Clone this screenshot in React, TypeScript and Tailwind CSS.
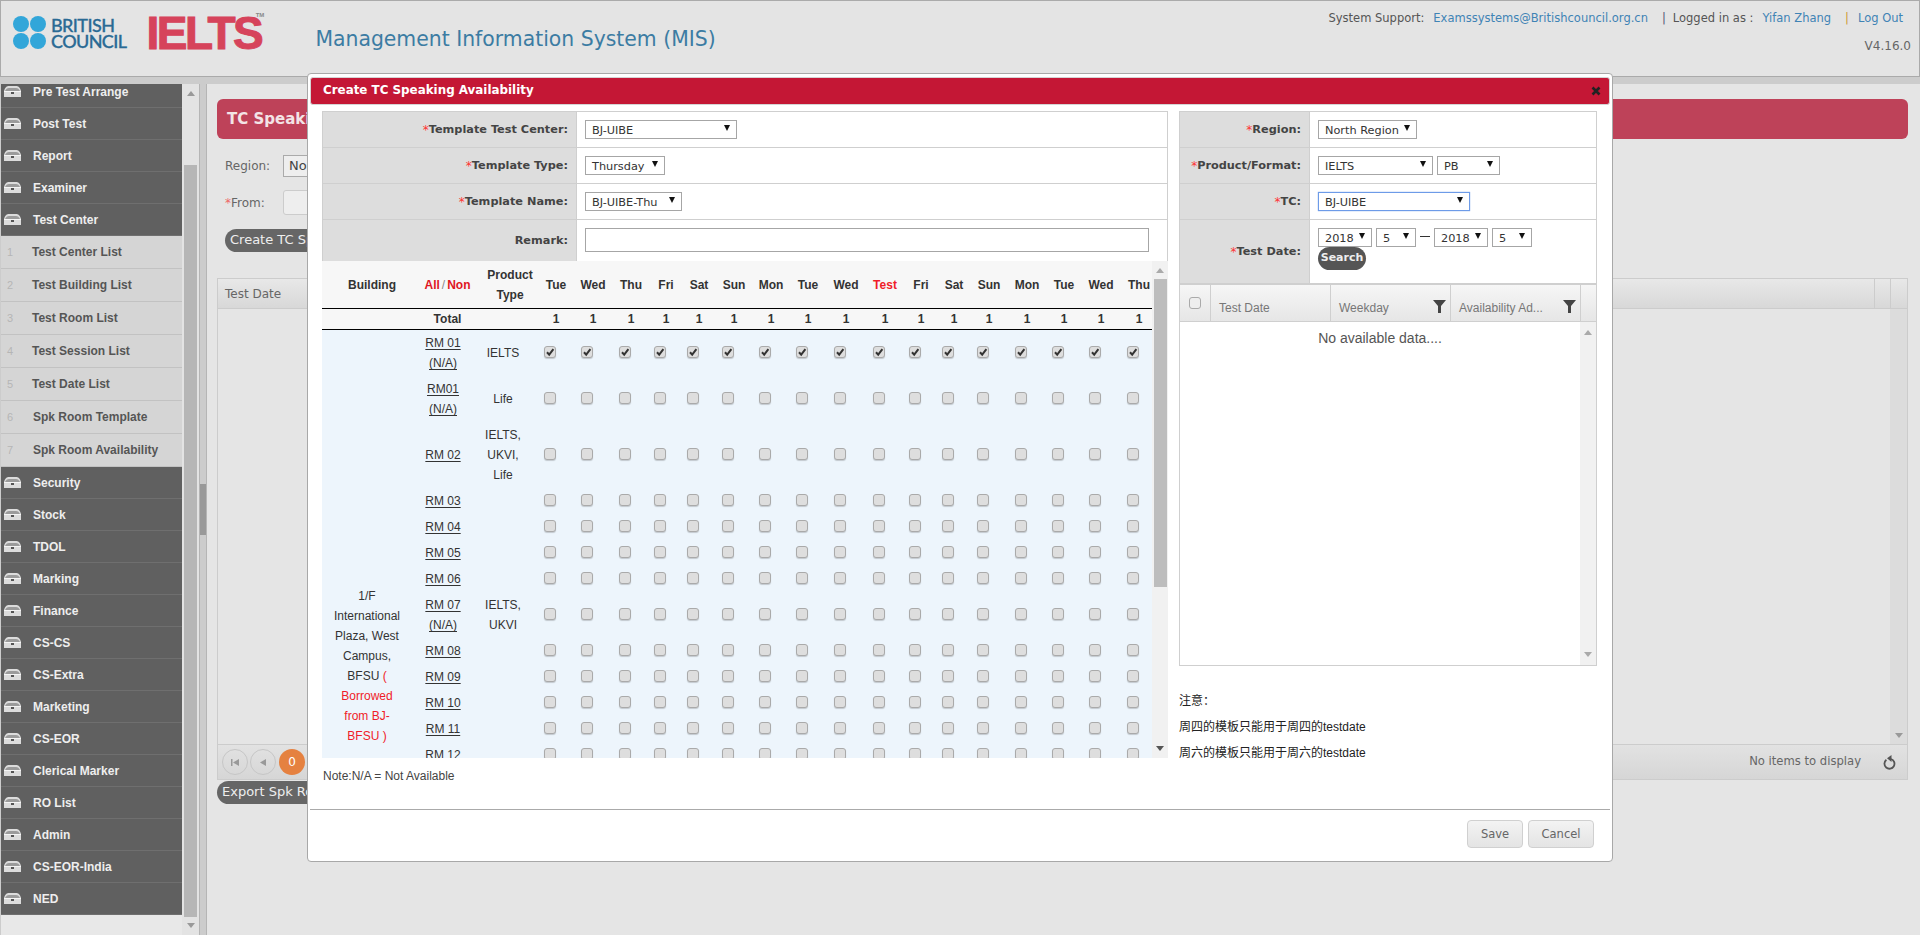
import React from 'react';

const DJ = "font-['DejaVu_Sans',sans-serif]";
const AR = "font-['Liberation_Sans',Arial,sans-serif]";

function Arrow({ cls = '' }: { cls?: string }) {
  return (
    <svg width="6" height="7" viewBox="0 0 6 7" className={cls}>
      <polygon points="0,0 6,0 3,6" fill="#111" />
    </svg>
  );
}

function Select({ text, w, focus }: { text: string; w: string; focus?: boolean }) {
  return (
    <div
      className={`${w} h-[19px] shrink-0 flex items-center justify-between bg-white pl-[6px] pr-[6px] text-[11.3px] leading-[19px] text-[#333] border ${
        focus ? 'border-[#6d9be8] shadow-[0_0_1px_#6d9be8]' : 'border-[#a6a6a6]'
      }`}
    >
      <span className="whitespace-nowrap mt-[1px]">{text}</span>
      <Arrow cls="-mt-[3px]" />
    </div>
  );
}

function FormRow({ label, req, h, children, labelW, last }: { label: string; req?: boolean; h: string; children: React.ReactNode; labelW: string; last?: boolean }) {
  return (
    <div className={`flex ${h} ${last ? '' : 'border-b border-[#cfcfcf]'}`}>
      <div className={`${labelW} shrink-0 bg-[#dddddd] border-r border-[#cfcfcf] flex items-center justify-end pr-[8px] pt-[2px] text-[11.3px] font-bold text-[#444] whitespace-nowrap`}>
        {req && <span className="text-[#f33] font-normal text-[12px] -mt-[2px]">*</span>}
        {label}
      </div>
      <div className="flex-1 pl-[8px] pt-[8px]">{children}</div>
    </div>
  );
}

function Check({ on }: { on?: boolean }) {
  return (
    <span className="inline-block align-middle w-[12px] h-[12px] mr-[12px] -mt-[4px] rounded-[3px] bg-[#dedede] border border-[#aaaaaa] shadow-[0_1px_1px_rgba(0,0,0,0.18)] relative">
      {on && (
        <svg viewBox="0 0 12 12" className="absolute -left-[1px] -top-[1px] w-[12px] h-[12px]">
          <path d="M3 6.2 L5.2 8.6 L9.4 3.2" fill="none" stroke="#333" strokeWidth="2" />
        </svg>
      )}
    </span>
  );
}

function Tray() {
  return (
    <svg width="19" height="13" viewBox="0 0 19 13" className="shrink-0">
      <path d="M1 6 C2 2 4 1 6 1 H13 C15 1 17 2 18 6 V12 H1 Z" fill="#dcdcdc" />
      <path d="M2 6 C3 4 4 3 6 3 H13 C15 3 16 4 17 6 Z" fill="#9b9b9b" />
      <rect x="1" y="6" width="17" height="1" fill="#f5f5f5" />
      <rect x="8" y="7" width="3" height="2" fill="#555" />
    </svg>
  );
}

const TopMenu = ['Pre Test Arrange', 'Post Test', 'Report', 'Examiner', 'Test Center'];
const SubMenu = ['Test Center List', 'Test Building List', 'Test Room List', 'Test Session List', 'Test Date List', 'Spk Room Template', 'Spk Room Availability'];
const BottomMenu = ['Security', 'Stock', 'TDOL', 'Marking', 'Finance', 'CS-CS', 'CS-Extra', 'Marketing', 'CS-EOR', 'Clerical Marker', 'RO List', 'Admin', 'CS-EOR-India', 'NED'];

function MenuRow({ t }: { t: string }) {
  return (
    <div className="h-[32px] flex items-center bg-[#606060] border-b border-[#6f6f6f] pl-[2px]">
      <Tray />
      <span className="ml-[11px] text-[12px] font-bold text-[#eeeeee]">{t}</span>
    </div>
  );
}

function TriUp({ c = '#999' }: { c?: string }) {
  return (
    <svg width="8" height="5" viewBox="0 0 8 5">
      <polygon points="0,5 8,5 4,0" fill={c} />
    </svg>
  );
}
function TriDown({ c = '#999' }: { c?: string }) {
  return (
    <svg width="8" height="5" viewBox="0 0 8 5">
      <polygon points="0,0 8,0 4,5" fill={c} />
    </svg>
  );
}

function Sidebar() {
  return (
    <div className="w-[198px] ml-[1px] shrink-0 flex bg-[#e8e8e8] h-full">
      <div className={`w-[181px] h-full overflow-hidden ${AR}`}>
        <div className="-mt-[8px]">
          {TopMenu.map((t) => <MenuRow key={t} t={t} />)}
          {SubMenu.map((t, i) => (
            <div key={t} className="h-[33px] flex items-center bg-[#d5d5d5] border-b border-[#c2c2c2] text-[12px] font-bold text-[#555555]">
              <span className="w-[31px] pl-[6px] text-[11px] font-normal text-[#b5b5b5]">{i + 1}</span>
              <span className={i > 4 ? 'ml-[1px] font-bold' : 'font-bold'}>{t}</span>
            </div>
          ))}
          {BottomMenu.map((t) => <MenuRow key={t} t={t} />)}
        </div>
      </div>
      <div className="w-[17px] h-full flex flex-col items-center bg-[#e3e3e3] pt-[7px]">
        <TriUp />
        <div className="w-[13px] h-[752px] mt-[69px] bg-[#b6b6b6]" />
        <div className="mt-[6px]"><TriDown /></div>
      </div>
    </div>
  );
}

function Splitter() {
  return (
    <div className="w-[8px] shrink-0 h-full flex flex-col border-x border-[#b5b5b5] bg-[#cccccc] pt-[400px]">
      <div className="h-[51px] bg-[#999999]" />
    </div>
  );
}

function Funnel() {
  return (
    <svg width="13" height="13" viewBox="0 0 13 13">
      <polygon points="0,0 13,0 8,6 8,13 5,13 5,6" fill="#444" />
    </svg>
  );
}

function Main() {
  return (
    <div className={`flex-1 h-full bg-[#e5e5e5] pl-[10px] pr-[12px] pt-[15px] ${DJ} text-[#555]`}>
      <div className="h-[40px] bg-[#be4259] rounded-[6px] flex items-center pl-[10px] text-[15px] font-bold text-[#f3e4e6]">TC Speaking Availability</div>
      <div className="flex items-center h-[22px] mt-[16px] pl-[8px] text-[12px] text-[#666]">
        <span className="w-[58px]">Region:</span>
        <div className="w-[100px] h-[22px] border border-[#aaa] bg-[#eee] pl-[5px] leading-[20px] text-[13px] text-[#444]">North Region</div>
      </div>
      <div className="flex items-center h-[25px] mt-[13px] pl-[8px] text-[12px] text-[#666]">
        <span className="w-[58px]"><span className="text-[#e66]">*</span>From:</span>
        <div className="w-[100px] h-[25px] border border-[#ccc] rounded-[3px] bg-[#eee]" />
      </div>
      <div className="mt-[14px] ml-[8px] w-fit h-[23px] rounded-full bg-[#666] px-[5px] leading-[21px] text-[13px] text-[#eee]">Create TC Speaking Availability</div>
      <div className="mt-[26px] border border-[#ccc] h-[467px] flex flex-col">
        <div className="h-[30px] flex bg-gradient-to-b from-[#e8e8e8] to-[#d8d8d8] border-b border-[#ccc] items-center">
          <span className="pl-[7px] text-[12px] text-[#666]">Test Date</span>
          <div className="ml-auto h-full w-[16px] border-l border-[#ccc]" />
          <div className="h-full w-[17px] border-l border-[#ccc]" />
        </div>
        <div className="flex-1 flex justify-end">
          <div className="w-[17px] bg-[#dcdcdc] flex flex-col justify-end items-center pb-[6px]"><TriDown /></div>
        </div>
      </div>
      <div className="h-[35px] border border-t-0 border-[#ccc] bg-gradient-to-b from-[#e2e2e2] to-[#d6d6d6] flex items-center px-[4px] gap-[2px]">
        <div className="w-[26px] h-[26px] rounded-full border border-[#c6c6c6] flex items-center justify-center">
          <svg width="9" height="9" viewBox="0 0 9 9"><rect x="0" y="1" width="1.5" height="7" fill="#999" /><polygon points="8,1 8,8 2,4.5" fill="#999" /></svg>
        </div>
        <div className="w-[26px] h-[26px] rounded-full border border-[#c6c6c6] flex items-center justify-center">
          <svg width="7" height="9" viewBox="0 0 7 9"><polygon points="6,1 6,8 0,4.5" fill="#999" /></svg>
        </div>
        <div className="w-[26px] h-[26px] ml-[1px] rounded-full bg-[#e58140] flex items-center justify-center text-[12px] text-white">0</div>
        <span className="ml-auto mr-[20px] text-[11.6px] text-[#666]">No items to display</span>
        <svg width="14" height="16" viewBox="0 0 14 16" className="mr-[6px]">
          <path d="M3.4 5.8 A5 5 0 1 0 8 5" fill="none" stroke="#555" strokeWidth="1.8" />
          <polygon points="8.5,1 8.5,8 4,4.2" fill="#555" />
        </svg>
      </div>
      <div className="mt-[1px] w-fit h-[23px] rounded-full bg-[#666] px-[5px] leading-[21px] text-[13px] text-[#eee]">Export Spk Room Availability</div>
    </div>
  );
}

const heads = ['Tue', 'Wed', 'Thu', 'Fri', 'Sat', 'Sun', 'Mon', 'Tue', 'Wed', 'Test', 'Fri', 'Sat', 'Sun', 'Mon', 'Tue', 'Wed', 'Thu'];
const colW = ['w-[90px]', 'w-[71px]', 'w-[54px]', 'w-[38px]', 'w-[36px]', 'w-[40px]', 'w-[30px]', 'w-[36px]', 'w-[34px]', 'w-[40px]', 'w-[34px]', 'w-[42px]', 'w-[36px]', 'w-[36px]', 'w-[30px]', 'w-[40px]', 'w-[36px]', 'w-[38px]', 'w-[36px]', 'w-[40px]'];

type Room = { a: string; b?: string; p?: string[] };
const rooms: Room[] = [
  { a: 'RM 01', b: '(N/A)', p: ['IELTS'] },
  { a: 'RM01', b: '(N/A)', p: ['Life'] },
  { a: 'RM 02', p: ['IELTS,', 'UKVI,', 'Life'] },
  { a: 'RM 03' }, { a: 'RM 04' }, { a: 'RM 05' }, { a: 'RM 06' },
  { a: 'RM 07', b: '(N/A)', p: ['IELTS,', 'UKVI'] },
  { a: 'RM 08' }, { a: 'RM 09' }, { a: 'RM 10' }, { a: 'RM 11' }, { a: 'RM 12' },
  { a: 'RM 13' }, { a: 'RM 14' }, { a: 'RM 15' }, { a: 'RM 16' }, { a: 'RM 17' },
  { a: 'RM 18' }, { a: 'RM 19' }, { a: 'RM 20' }, { a: 'RM 21' },
];

function RoomTable() {
  return (
    <div className="w-[830px] h-[497px] overflow-hidden">
      <table className={`table-fixed w-[837px] border-separate border-spacing-0 text-[12px] leading-[20px] text-[#333] ${AR}`}>
        <colgroup>{colW.map((w, i) => <col key={i} className={w} />)}</colgroup>
        <thead className="bg-[#f7f7f7]">
          <tr>
            <th className="h-[48px] border-b border-black font-bold pl-[10px]">Building</th>
            <th className="border-b border-black font-bold text-[#e0161f]">All<span className="text-[#888] font-normal px-[2px]">/</span>Non</th>
            <th className="border-b border-black font-bold">Product<br />Type</th>
            {heads.map((h, i) => (
              <th key={i} className={`border-b border-black font-bold ${h === 'Test' ? 'text-[#f01c28]' : ''}`}>{h}</th>
            ))}
          </tr>
          <tr>
            <td className="h-[21px] border-b border-black" />
            <td className="border-b border-black text-center font-bold">Total</td>
            <td className="border-b border-black" />
            {heads.map((_, i) => <td key={i} className="border-b border-black text-center font-bold">1</td>)}
          </tr>
        </thead>
        <tbody className="bg-[#edf5fc]">
          {rooms.map((r, idx) => (
            <tr key={idx}>
              {idx === 0 && (
                <td rowSpan={rooms.length} className="text-center align-middle px-[8px]">
                  1/F International Plaza, West Campus, BFSU <span className="text-[#f01c28]">( Borrowed from BJ-BFSU )</span>
                </td>
              )}
              <td className="text-center py-[3px] pr-[9px] underline underline-offset-2">
                {r.a}
                {r.b && <><br />{r.b}</>}
              </td>
              <td className="text-center py-[3px] pr-[14px]">
                {r.p?.map((x, i) => <div key={i}>{x}</div>)}
              </td>
              {heads.map((_, i) => (
                <td key={i} className="text-center"><Check on={idx === 0} /></td>
              ))}
            </tr>
          ))}
        </tbody>
      </table>
    </div>
  );
}

function Modal() {
  return (
    <div className={`absolute left-[307px] top-[73px] w-[1306px] h-[789px] bg-white border border-[#a8a8a8] rounded-[4px] px-[2px] pt-[3px] flex flex-col ${DJ}`}>
      <div className="h-[28px] shrink-0 bg-[#c41735] border border-[#d4d4d4] rounded-[3px] flex items-center justify-between pl-[12px] pr-[8px]">
        <span className="text-[11.9px] font-bold text-white">Create TC Speaking Availability</span>
        <svg width="10" height="10" viewBox="0 0 10 10"><path d="M1.5 1.5 L8.5 8.5 M8.5 1.5 L1.5 8.5" stroke="#222" strokeWidth="2.6" /></svg>
      </div>
      <div className="flex h-[698px] shrink-0 mt-[6px] pl-[12px] gap-[11px]">
        <div className="w-[846px] shrink-0">
          <div className="border border-[#cfcfcf] border-b-0">
            <FormRow label="Template Test Center:" req h="h-[36px]" labelW="w-[254px]"><Select text="BJ-UIBE" w="w-[152px]" /></FormRow>
            <FormRow label="Template Type:" req h="h-[36px]" labelW="w-[254px]"><Select text="Thursday" w="w-[80px]" /></FormRow>
            <FormRow label="Template Name:" req h="h-[36px]" labelW="w-[254px]"><Select text="BJ-UIBE-Thu" w="w-[97px]" /></FormRow>
            <FormRow label="Remark:" h="h-[41px]" labelW="w-[254px]" last>
              <div className="w-[564px] h-[24px] border border-[#a6a6a6] bg-white" />
            </FormRow>
          </div>
          <div className="flex h-[497px]">
            <RoomTable />
            <div className="w-[16px] bg-[#f1f1f1] flex flex-col items-center pt-[7px]">
              <TriUp c="#aaa" />
              <div className="w-[13px] h-[308px] mt-[6px] bg-[#bdbdbd]" />
              <div className="mt-auto mb-[7px]"><TriDown c="#555" /></div>
            </div>
          </div>
          <div className={`pt-[10px] text-[12px] leading-[16px] text-[#444] pl-[1px] ${AR}`}>Note:N/A = Not Available</div>
        </div>
        <div className="w-[418px] shrink-0">
          <div className="border border-[#cfcfcf] border-b-0">
            <FormRow label="Region:" req h="h-[36px]" labelW="w-[130px]"><Select text="North Region" w="w-[99px]" /></FormRow>
            <FormRow label="Product/Format:" req h="h-[36px]" labelW="w-[130px]">
              <div className="flex gap-[4px]"><Select text="IELTS" w="w-[115px]" /><Select text="PB" w="w-[63px]" /></div>
            </FormRow>
            <FormRow label="TC:" req h="h-[36px]" labelW="w-[130px]"><Select text="BJ-UIBE" w="w-[152px]" focus /></FormRow>
            <FormRow label="Test Date:" req h="h-[64px]" labelW="w-[130px]">
              <div className="flex gap-[4px] items-center">
                <Select text="2018" w="w-[54px]" />
                <Select text="5" w="w-[40px]" />
                <div className="w-[10px] h-px bg-[#333] -mt-[3px]" />
                <Select text="2018" w="w-[54px]" />
                <Select text="5" w="w-[40px]" />
              </div>
              <div className="w-[48px] h-[23px] rounded-full bg-[#555] text-center text-[11px] font-bold leading-[21px] text-[#eee]">Search</div>
            </FormRow>
          </div>
          <div className={`border border-[#cfcfcf] h-[382px] flex flex-col ${AR}`}>
            <div className="h-[37px] flex shrink-0 bg-gradient-to-b from-[#f6f6f6] to-[#e6e6e6] border-b border-[#cfcfcf] text-[12px] text-[#777]">
              <div className="w-[31px] border-r border-[#cfcfcf] flex items-center justify-center">
                <span className="w-[12px] h-[12px] rounded-[3px] border border-[#aaa] bg-[#eee]" />
              </div>
              <div className="w-[120px] border-r border-[#cfcfcf] pl-[8px] pt-[13px] leading-[20px]">Test Date</div>
              <div className="w-[120px] border-r border-[#cfcfcf] pl-[8px] pt-[13px] leading-[20px] flex justify-between pr-[4px]">
                <span>Weekday</span><span className="pt-[2px]"><Funnel /></span>
              </div>
              <div className="w-[130px] border-r border-[#cfcfcf] pl-[8px] pt-[13px] leading-[20px] flex justify-between pr-[4px]">
                <span>Availability Ad...</span><span className="pt-[2px]"><Funnel /></span>
              </div>
            </div>
            <div className="flex-1 flex">
              <div className="flex-1 text-center text-[14px] text-[#555] pt-[7px] leading-[18px]">No available data....</div>
              <div className="w-[16px] bg-[#f1f1f1] flex flex-col items-center justify-between py-[8px]">
                <TriUp c="#aaa" /><TriDown c="#aaa" />
              </div>
            </div>
          </div>
          <div className={`mt-[22px] text-[12px] leading-[26px] text-[#222] font-['Liberation_Sans','Noto_Sans_CJK_SC',sans-serif]`}>
            <div>注意：</div>
            <div>周四的模板只能用于周四的testdate</div>
            <div>周六的模板只能用于周六的testdate</div>
          </div>
        </div>
      </div>
      <div className="border-t border-[#aaaaaa] flex justify-end gap-[5px] pt-[10px] pr-[16px]">
        <div className="w-[56px] h-[28px] rounded-[4px] border border-[#d0d0d0] bg-gradient-to-b from-[#f3f3f3] to-[#e4e4e4] text-center leading-[26px] text-[11.5px] text-[#666]">Save</div>
        <div className="w-[66px] h-[28px] rounded-[4px] border border-[#d0d0d0] bg-gradient-to-b from-[#f3f3f3] to-[#e4e4e4] text-center leading-[26px] text-[11.5px] text-[#666]">Cancel</div>
      </div>
    </div>
  );
}

function Header() {
  return (
    <div className={`h-[77px] shrink-0 bg-[#e4e4e4] border border-[#aaaaaa] flex ${DJ}`}>
      <div className="flex pl-[12px] pt-[15px] h-full">
        <div className="grid grid-cols-2 gap-[1px] w-[33px] h-[33px] shrink-0">
          <span className="rounded-full bg-[#32a6d9]" /><span className="rounded-full bg-[#32a6d9]" />
          <span className="rounded-full bg-[#32a6d9]" /><span className="rounded-full bg-[#32a6d9]" />
        </div>
        <div className="ml-[5px] -mt-[1px] text-[18px] leading-[16px] pt-[2px] font-['Lato',sans-serif] text-[#2a6a94] font-medium tracking-[-0.6px] [-webkit-text-stroke:0.3px_#2a6a94]">BRITISH<br />COUNCIL</div>
        <div className={`ml-[20px] -mt-[6px] text-[46px] leading-[46px] font-bold text-[#d6435b] tracking-[-2.4px] [-webkit-text-stroke:1px_#d6435b] ${AR} relative`}>
          IELTS
          <span className="absolute -right-[3px] top-[1px] text-[6px] leading-[8px] tracking-normal text-[#888] [-webkit-text-stroke:0px_#888]">TM</span>
        </div>
      </div>
      <div className="ml-[54px] mt-[26px] text-[20.4px] leading-[24px] text-[#3c7ca3] whitespace-nowrap">Management Information System (MIS)</div>
      <div className="ml-auto pr-[8px] pt-[9px] flex flex-col items-end text-[11.5px] leading-[16px] text-[#555]">
        <div className="flex whitespace-nowrap pr-[8px]">
          <span>System Support:</span>
          <span className="ml-[9px] text-[#3f83b5]">Examssystems@Britishcouncil.org.cn</span>
          <span className="ml-[14px] text-[#557]">|</span>
          <span className="ml-[7px]">Logged in as :</span>
          <span className="ml-[9px] text-[#3f83b5]">Yifan Zhang</span>
          <span className="ml-[14px] text-[#c93]">|</span>
          <span className="ml-[9px] text-[#3f83b5]">Log Out</span>
        </div>
        <div className="mt-[12px] text-[12px] text-[#666]">V4.16.0</div>
      </div>
    </div>
  );
}

export default function App() {
  return (
    <div className="relative w-[1920px] h-[935px] overflow-hidden bg-[#cccccc] flex flex-col">
      <Header />
      <div className="flex mt-[7px] h-[851px]">
        <Sidebar />
        <Splitter />
        <Main />
      </div>
      <Modal />
    </div>
  );
}
